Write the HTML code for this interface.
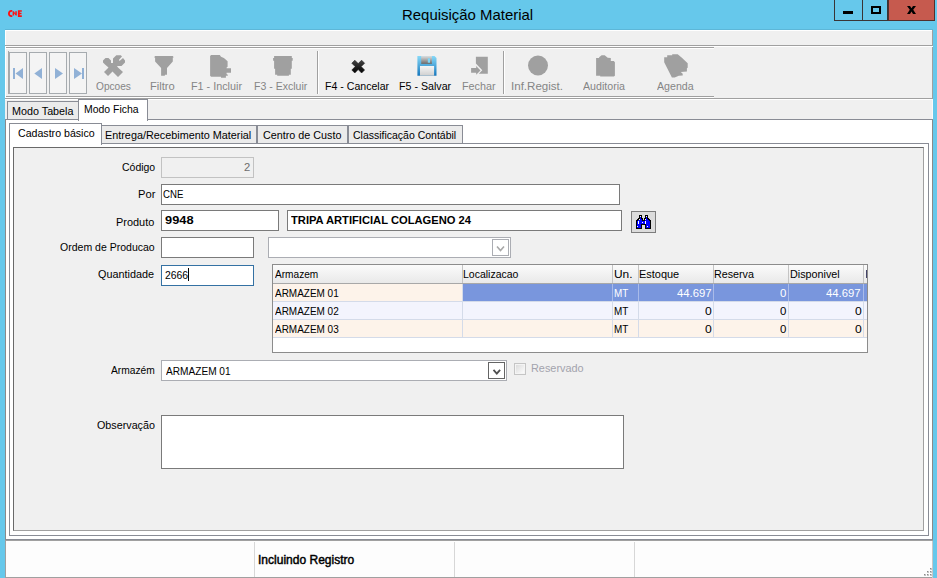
<!DOCTYPE html><html><head><meta charset="utf-8"><style>
html,body{margin:0;padding:0;width:937px;height:578px;overflow:hidden;}
body{position:relative;font-family:"Liberation Sans", sans-serif;}
.b{position:absolute;}
.t{position:absolute;white-space:nowrap;line-height:1;}
</style></head><body>
<div class="b" style="left:0px;top:0px;width:937px;height:578px;background:#66c8eb;"></div>
<div class="b" style="left:5px;top:29px;width:928px;height:1px;background:#5db7d8;"></div>
<div class="b" style="left:5px;top:30px;width:928px;height:548px;background:#f0f0f0;"></div>
<div class="b" style="left:5px;top:30px;width:927px;height:1px;background:#ffffff;"></div>
<div class="b" style="left:5px;top:30px;width:1px;height:69px;background:#ffffff;"></div>
<div class="b" style="left:932px;top:30px;width:1px;height:69px;background:#a0a0a0;"></div>
<div class="b" style="left:932px;top:99px;width:1px;height:20px;background:#fafafa;"></div>
<div class="b" style="left:5px;top:45px;width:928px;height:1px;background:#a0a0a0;"></div>
<div class="b" style="left:5px;top:46px;width:928px;height:1px;background:#ffffff;"></div>
<div class="b" style="left:6px;top:47px;width:708px;height:1px;background:#a0a0a0;"></div>
<div class="b" style="left:6px;top:48px;width:708px;height:1px;background:#ffffff;"></div>
<div class="b" style="left:6px;top:96px;width:708px;height:1px;background:#a0a0a0;"></div>
<div class="b" style="left:6px;top:97px;width:708px;height:1px;background:#ffffff;"></div>
<div class="b" style="left:5px;top:98px;width:928px;height:1px;background:#a0a0a0;"></div>
<div class="b" style="left:5px;top:99px;width:928px;height:1px;background:#ffffff;"></div>
<div class="b" style="left:8px;top:51px;width:1px;height:43px;background:#a8a8a8;"></div>
<div class="b" style="left:9px;top:52px;width:18px;height:42px;background:#f4f4f4;box-sizing:border-box;border:1px solid #a6abaf;"></div>
<div class="b" style="left:29px;top:52px;width:18px;height:42px;background:#f4f4f4;box-sizing:border-box;border:1px solid #a6abaf;"></div>
<div class="b" style="left:49px;top:52px;width:18px;height:42px;background:#f4f4f4;box-sizing:border-box;border:1px solid #a6abaf;"></div>
<div class="b" style="left:69px;top:52px;width:18px;height:42px;background:#f4f4f4;box-sizing:border-box;border:1px solid #a6abaf;"></div>
<div class="b" style="left:317px;top:51px;width:1px;height:43px;background:#a0a0a0;"></div>
<div class="b" style="left:318px;top:51px;width:1px;height:43px;background:#ffffff;"></div>
<div class="b" style="left:503px;top:51px;width:1px;height:43px;background:#a0a0a0;"></div>
<div class="b" style="left:504px;top:51px;width:1px;height:43px;background:#ffffff;"></div>
<div class="b" style="left:5px;top:119px;width:928px;height:422px;background:#ffffff;"></div>
<div class="b" style="left:5px;top:119px;width:928px;height:1px;background:#898c95;"></div>
<div class="b" style="left:5px;top:119px;width:1px;height:422px;background:#8a8a8a;"></div>
<div class="b" style="left:932px;top:119px;width:1px;height:422px;background:#8a8a8a;"></div>
<div class="b" style="left:5px;top:539px;width:928px;height:1px;background:#898c95;"></div>
<div class="b" style="left:5px;top:540px;width:928px;height:1px;background:#a0a0a0;"></div>
<div class="b" style="left:7px;top:101px;width:72px;height:19px;background:#ebebeb;box-sizing:border-box;border:1px solid #898c95;border-bottom:none;"></div>
<div class="b" style="left:78px;top:99px;width:70px;height:21px;background:#ffffff;box-sizing:border-box;border:1px solid #898c95;border-bottom:none;"></div>
<div class="b" style="left:78px;top:99px;width:1px;height:22px;background:#898c95;"></div>
<div class="b" style="left:147px;top:99px;width:1px;height:22px;background:#898c95;"></div>
<div class="b" style="left:5px;top:119px;width:73px;height:1px;background:#898c95;"></div>
<div class="b" style="left:148px;top:119px;width:785px;height:1px;background:#898c95;"></div>
<div class="b" style="left:9px;top:143px;width:920px;height:393px;background:#ffffff;box-sizing:border-box;border:1px solid #898c95;"></div>
<div class="b" style="left:101px;top:125px;width:156px;height:18px;background:#ebebeb;box-sizing:border-box;border:1px solid #898c95;border-bottom:none;"></div>
<div class="b" style="left:257px;top:125px;width:91px;height:18px;background:#ebebeb;box-sizing:border-box;border:1px solid #898c95;border-bottom:none;"></div>
<div class="b" style="left:348px;top:125px;width:115px;height:18px;background:#ebebeb;box-sizing:border-box;border:1px solid #898c95;border-bottom:none;"></div>
<div class="b" style="left:9px;top:123px;width:93px;height:22px;background:#ffffff;box-sizing:border-box;border:1px solid #898c95;border-bottom:none;"></div>
<div class="b" style="left:13px;top:147px;width:911px;height:384px;background:#f0f0f0;box-sizing:border-box;border:1px solid #a0a0a0;border-top-color:#696969;border-left-color:#696969;"></div>
<div class="b" style="left:5px;top:541px;width:928px;height:37px;background:#fdfdfd;"></div>
<div class="b" style="left:5px;top:577px;width:928px;height:1px;background:#a0a0a0;"></div>
<div class="b" style="left:5px;top:541px;width:1px;height:37px;background:#a0a0a0;"></div>
<div class="b" style="left:932px;top:541px;width:1px;height:37px;background:#c8c8c8;"></div>
<div class="b" style="left:254px;top:542px;width:1px;height:35px;background:#d7d7d7;"></div>
<div class="b" style="left:454px;top:542px;width:1px;height:35px;background:#d7d7d7;"></div>
<div class="b" style="left:634px;top:542px;width:1px;height:35px;background:#d7d7d7;"></div>
<div class="b" style="left:161px;top:157px;width:93px;height:21px;background:#f0f0f0;box-sizing:border-box;border:1px solid #c2c2c2;"></div>
<div class="b" style="left:161px;top:184px;width:459px;height:21px;background:#fff;box-sizing:border-box;border:1px solid #7a7a7a;"></div>
<div class="b" style="left:161px;top:210px;width:118px;height:21px;background:#fff;box-sizing:border-box;border:1px solid #7a7a7a;"></div>
<div class="b" style="left:287px;top:210px;width:335px;height:21px;background:#fff;box-sizing:border-box;border:1px solid #7a7a7a;"></div>
<div class="b" style="left:631px;top:211px;width:25px;height:22px;background:#dcdcdc;box-sizing:border-box;border:1px solid #7d7d7d;"></div>
<div class="b" style="left:161px;top:237px;width:93px;height:21px;background:#fff;box-sizing:border-box;border:1px solid #7a7a7a;"></div>
<div class="b" style="left:268px;top:237px;width:243px;height:21px;background:#fff;box-sizing:border-box;border:1px solid #abadb3;"></div>
<div class="b" style="left:492px;top:239px;width:17px;height:17px;background:#fff;box-sizing:border-box;border:1px solid #abadb3;"></div>
<div class="b" style="left:161px;top:265px;width:93px;height:21px;background:#fff;box-sizing:border-box;border:1px solid #3471a3;"></div>
<div class="b" style="left:188px;top:268px;width:1px;height:13px;background:#000;"></div>
<div class="b" style="left:161px;top:360px;width:346px;height:21px;background:#fff;box-sizing:border-box;border:1px solid #abadb3;"></div>
<div class="b" style="left:488px;top:362px;width:17px;height:17px;background:#fff;box-sizing:border-box;border:1px solid #646464;"></div>
<div class="b" style="left:514px;top:363px;width:12px;height:12px;background:#f4f4f4;box-sizing:border-box;border:1px solid #c5c5c5;"></div>
<div class="b" style="left:161px;top:415px;width:463px;height:54px;background:#fff;box-sizing:border-box;border:1px solid #7a7a7a;"></div>
<div class="b" style="left:272px;top:264px;width:596px;height:89px;background:#ffffff;box-sizing:border-box;border:1px solid #8c8c8c;"></div>
<div class="b" style="left:273px;top:265px;width:594px;height:19px;background:linear-gradient(#fbfbfb,#e8e8e8);"></div>
<div class="b" style="left:273px;top:283px;width:594px;height:1px;background:#a8a8a8;"></div>
<div class="b" style="left:462px;top:265px;width:1px;height:18px;background:#c4c4c4;"></div>
<div class="b" style="left:612px;top:265px;width:1px;height:18px;background:#c4c4c4;"></div>
<div class="b" style="left:638px;top:265px;width:1px;height:18px;background:#c4c4c4;"></div>
<div class="b" style="left:713px;top:265px;width:1px;height:18px;background:#c4c4c4;"></div>
<div class="b" style="left:788px;top:265px;width:1px;height:18px;background:#c4c4c4;"></div>
<div class="b" style="left:863px;top:265px;width:1px;height:18px;background:#c4c4c4;"></div>
<div class="b" style="left:273px;top:284px;width:594px;height:17px;background:#fdf3ea;"></div>
<div class="b" style="left:273px;top:301px;width:594px;height:1px;background:#d4dbe9;"></div>
<div class="b" style="left:462px;top:284px;width:1px;height:17px;background:#d4dbe9;"></div>
<div class="b" style="left:612px;top:284px;width:1px;height:17px;background:#d4dbe9;"></div>
<div class="b" style="left:638px;top:284px;width:1px;height:17px;background:#d4dbe9;"></div>
<div class="b" style="left:713px;top:284px;width:1px;height:17px;background:#d4dbe9;"></div>
<div class="b" style="left:788px;top:284px;width:1px;height:17px;background:#d4dbe9;"></div>
<div class="b" style="left:863px;top:284px;width:1px;height:17px;background:#d4dbe9;"></div>
<div class="b" style="left:273px;top:302px;width:594px;height:17px;background:#f3f4fd;"></div>
<div class="b" style="left:273px;top:319px;width:594px;height:1px;background:#d4dbe9;"></div>
<div class="b" style="left:462px;top:302px;width:1px;height:17px;background:#d4dbe9;"></div>
<div class="b" style="left:612px;top:302px;width:1px;height:17px;background:#d4dbe9;"></div>
<div class="b" style="left:638px;top:302px;width:1px;height:17px;background:#d4dbe9;"></div>
<div class="b" style="left:713px;top:302px;width:1px;height:17px;background:#d4dbe9;"></div>
<div class="b" style="left:788px;top:302px;width:1px;height:17px;background:#d4dbe9;"></div>
<div class="b" style="left:863px;top:302px;width:1px;height:17px;background:#d4dbe9;"></div>
<div class="b" style="left:273px;top:320px;width:594px;height:17px;background:#fdf3ea;"></div>
<div class="b" style="left:273px;top:337px;width:594px;height:1px;background:#d4dbe9;"></div>
<div class="b" style="left:462px;top:320px;width:1px;height:17px;background:#d4dbe9;"></div>
<div class="b" style="left:612px;top:320px;width:1px;height:17px;background:#d4dbe9;"></div>
<div class="b" style="left:638px;top:320px;width:1px;height:17px;background:#d4dbe9;"></div>
<div class="b" style="left:713px;top:320px;width:1px;height:17px;background:#d4dbe9;"></div>
<div class="b" style="left:788px;top:320px;width:1px;height:17px;background:#d4dbe9;"></div>
<div class="b" style="left:863px;top:320px;width:1px;height:17px;background:#d4dbe9;"></div>
<div class="b" style="left:463px;top:284px;width:404px;height:17px;background:#7996dd;"></div>
<div class="b" style="left:612px;top:284px;width:1px;height:17px;background:#a9bbe9;"></div>
<div class="b" style="left:638px;top:284px;width:1px;height:17px;background:#a9bbe9;"></div>
<div class="b" style="left:713px;top:284px;width:1px;height:17px;background:#a9bbe9;"></div>
<div class="b" style="left:788px;top:284px;width:1px;height:17px;background:#a9bbe9;"></div>
<div class="b" style="left:863px;top:284px;width:1px;height:17px;background:#a9bbe9;"></div>
<div class="b" style="left:866px;top:270px;width:1px;height:8px;background:#45456a;"></div>
<svg class="ic" width="937" height="578" viewBox="0 0 937 578" style="position:absolute;left:0;top:0;">
<defs>
<linearGradient id="gx" x1="0" y1="0" x2="0" y2="1"><stop offset="0" stop-color="#444"/><stop offset="1" stop-color="#000"/></linearGradient>
<linearGradient id="gfb" x1="0" y1="0" x2="0" y2="1"><stop offset="0" stop-color="#86d8f7"/><stop offset="1" stop-color="#1677bd"/></linearGradient>
<linearGradient id="gfs" x1="0" y1="0" x2="0" y2="1"><stop offset="0" stop-color="#dedede"/><stop offset="1" stop-color="#6a6a6a"/></linearGradient>
<linearGradient id="gfl" x1="0" y1="0" x2="0" y2="1"><stop offset="0" stop-color="#f6f6f6"/><stop offset="1" stop-color="#cfcfcf"/></linearGradient>
<linearGradient id="gcb" x1="0" y1="0" x2="1" y2="1"><stop offset="0" stop-color="#dcdcdc"/><stop offset="1" stop-color="#fbfbfb"/></linearGradient>
</defs>
<!-- CNE logo -->
<g fill="#ff1010">
<path d="M12.3,10 C9.5,9.6 8,11.3 8,13.5 C8,15.8 9.6,17.3 12.3,16.9 L12.3,15.2 C10.6,15.5 9.9,14.6 9.9,13.5 C9.9,12.3 10.6,11.4 12.3,11.7 Z"/>
<path d="M12.6,11.3 H13.8 L15.3,13.6 V11.3 H16.8 V15.6 H15.7 L14.1,13.3 V15.6 H12.6 Z"/>
<path d="M17.9,10.2 H21.8 V11.8 H19.7 V12.8 H21.5 V14.2 H19.7 V15.3 H21.8 V16.9 H17.9 Z"/>
</g>
<!-- window buttons -->
<rect x="834.5" y="-1" width="53" height="21.5" fill="none" stroke="#3a3535" stroke-width="1"/>
<line x1="862.5" y1="0" x2="862.5" y2="20" stroke="#3a3535" stroke-width="1"/>
<rect x="888" y="0" width="47" height="21" fill="#c65a4e"/>
<rect x="888.5" y="-1" width="46" height="21.5" fill="none" stroke="#52302c" stroke-width="1"/>
<rect x="843" y="11" width="10" height="3" fill="#000"/>
<rect x="872" y="7" width="8" height="6" fill="none" stroke="#000" stroke-width="2"/>
<path d="M907,6 H910 L911.5,8.3 L913,6 H916 L913.2,9.8 L916,14 H913 L911.5,11.6 L910,14 H907 L909.8,9.8 Z" fill="#000"/>
<!-- nav arrows -->
<g fill="#91b1d6">
<rect x="13" y="68" width="2" height="11"/>
<path d="M15.5,73.5 L23,68 V79 Z"/>
<path d="M34.3,73.5 L42,68 V79 Z"/>
<path d="M63,73.5 L55,68 V79 Z"/>
<path d="M82,73.5 L74,68 V79 Z"/>
<rect x="82" y="68" width="2" height="11"/>
</g>
<!-- gray toolbar icons -->
<g fill="#a0a0a0">
<path transform="translate(100,52)" d="M3,8.5 L5.5,6 H8.5 L11,8.5 V11 H13 V6.5 L16.3,3.2 H20.8 L22,4.5 L19,7.8 L19.5,9 L23,6 L25,8.5 V10.5 L21.5,14 H17 L18,15.5 L23,20 L18,25 L12.5,19.5 L8,24 L4,20 L8.5,15.5 L5,12.5 L3,10.5 Z"/>
<path transform="translate(150,52)" d="M5.1,4.1 H22.8 L23.7,5.3 L22.8,5.8 V9.4 L17,16 V22.8 H15 L14.8,23.7 H11.1 V16 L5.1,9.4 V5.8 L4.1,5.3 Z"/>
<path transform="translate(206,52)" d="M5.1,3.1 H13.8 L15,4.8 L17.9,6.1 L21.6,9.2 V14.8 L20.6,15.5 V16.2 H25 V20.8 H20.6 V22 L21.8,22.8 V23.7 H19.9 V25.7 H15 V24.7 H5.1 L4.1,23.7 V4.1 Z"/>
<path transform="translate(269,52)" d="M5.1,4.1 H22.8 V6.1 H23.7 V8.7 H22.8 V16.7 H21.8 V22.8 H19.9 V23.7 H8.2 V22.8 H6.1 V16.7 H5.1 V8.7 H4.1 V6.1 H5.1 Z"/>
<path transform="translate(466,52)" d="M9.9,4.8 H21.8 V21.8 H12.8 L16.3,18.2 L9.9,11.6 Z"/>
<path transform="translate(466,52)" d="M5.1,16 H10.2 V14 L14.5,18.4 L10.2,22.8 V20.8 H5.1 Z"/>
<circle cx="538" cy="65.5" r="10"/>
<path transform="translate(590,50)" d="M6.1,8 H9.1 V7.2 L11.6,5.3 H14.7 L17.7,7.8 L20.8,8 V11.1 H23.8 L24.9,12.2 V25.7 L23.8,26.6 H10.2 V25.7 H6.1 Z"/>
<path transform="translate(660,50)" d="M4.2,7.2 H7.2 V5.3 H12.2 V4.2 H17.7 L21.6,7.5 L27.7,13.3 V17.7 L26.9,18.3 V21.6 L20.8,21.9 L22.7,23.8 V25.5 L18.8,25.7 L14.7,27.4 H11.9 L4.2,12.2 Z"/>
</g>
<!-- cancel X -->
<path transform="translate(344,52)" d="M7.80,11.20 L10.80,8.20 L14.20,11.60 L17.60,8.20 L20.60,11.20 L17.20,14.60 L20.60,18.00 L17.60,21.00 L14.20,17.60 L10.80,21.00 L7.80,18.00 L11.20,14.60 Z" stroke="#222" stroke-width="0.6" stroke-linejoin="round" fill="url(#gx)"/>
<!-- floppy -->
<g transform="translate(413,52)">
<path d="M4.4,4.1 H21.5 L23.5,6.1 V23.7 H4.4 Z" fill="url(#gfb)"/>
<rect x="8.2" y="4.1" width="10.7" height="7.8" fill="url(#gfs)"/>
<rect x="14.8" y="6.3" width="2.2" height="4.4" fill="#7fd6f6"/>
<rect x="7" y="14" width="14.1" height="9.7" fill="url(#gfl)"/>
</g>
<!-- binoculars -->
<g transform="translate(636,215)" shape-rendering="crispEdges">
<path d="M3,0 H6 V3 H7 V5 H8 V3 H9 V0 H12 V3 H13 V4 H14 V5 H15 V14 H9 V10 H6 V14 H0 V5 H1 V4 H2 V3 H3 Z" fill="#000"/>
<path d="M4,1 H5 V4 H6 V6 H9 V4 H10 V1 H11 V4 H12 V5 H13 V6 H14 V13 H10 V9 H5 V13 H1 V6 H2 V5 H3 V4 H4 Z" fill="#0000ff"/>
<g fill="#fff"><rect x="4" y="1" width="1" height="1"/><rect x="10" y="1" width="1" height="1"/><rect x="3" y="4" width="1" height="1"/><rect x="9" y="4" width="1" height="1"/><rect x="2" y="6" width="1" height="3"/><rect x="6" y="7" width="1" height="1"/><rect x="9" y="6" width="1" height="3"/><rect x="1" y="11" width="1" height="1"/><rect x="11" y="11" width="1" height="1"/></g>
</g>
<!-- combo chevrons -->
<path d="M493.5,369.8 L496.8,373.6 L500.1,369.8" fill="none" stroke="#505050" stroke-width="1.8"/>
<path d="M497,246.5 L500.5,250.5 L504,246.5" fill="none" stroke="#a8a8a8" stroke-width="1.6"/>
<!-- checkbox inner -->
<rect x="516" y="365" width="8" height="8" fill="url(#gcb)"/>
<!-- size grip -->
<g><rect x="930" y="568" width="2" height="2" fill="#c4c4c4"/><rect x="930" y="568" width="1" height="1" fill="#8a8a8a"/><rect x="927" y="571" width="2" height="2" fill="#c4c4c4"/><rect x="927" y="571" width="1" height="1" fill="#8a8a8a"/><rect x="930" y="571" width="2" height="2" fill="#c4c4c4"/><rect x="930" y="571" width="1" height="1" fill="#8a8a8a"/><rect x="924" y="574" width="2" height="2" fill="#c4c4c4"/><rect x="924" y="574" width="1" height="1" fill="#8a8a8a"/><rect x="927" y="574" width="2" height="2" fill="#c4c4c4"/><rect x="927" y="574" width="1" height="1" fill="#8a8a8a"/><rect x="930" y="574" width="2" height="2" fill="#c4c4c4"/><rect x="930" y="574" width="1" height="1" fill="#8a8a8a"/></g>
</svg>

<div class="t" id="t0" style="left:402.45px;top:7.01px;font-size:15px;font-weight:400;color:#000;transform:scaleX(0.9958);transform-origin:0 0;">Requisição Material</div>
<div class="t" id="t1" style="left:96.00px;top:81.00px;font-size:11px;font-weight:400;color:#858585;transform:scaleX(0.9211);transform-origin:0 0;">Opcoes</div>
<div class="t" id="t2" style="left:150.39px;top:81.00px;font-size:11px;font-weight:400;color:#858585;transform:scaleX(1.0135);transform-origin:0 0;">Filtro</div>
<div class="t" id="t3" style="left:191.20px;top:81.00px;font-size:11px;font-weight:400;color:#858585;transform:scaleX(0.9811);transform-origin:0 0;">F1 - Incluir</div>
<div class="t" id="t4" style="left:253.81px;top:81.00px;font-size:11px;font-weight:400;color:#858585;transform:scaleX(0.9590);transform-origin:0 0;">F3 - Excluir</div>
<div class="t" id="t5" style="left:324.65px;top:81.00px;font-size:11px;font-weight:400;color:#000;transform:scaleX(0.9621);transform-origin:0 0;">F4 - Cancelar</div>
<div class="t" id="t6" style="left:399.17px;top:81.00px;font-size:11px;font-weight:400;color:#000;transform:scaleX(0.9687);transform-origin:0 0;">F5 - Salvar</div>
<div class="t" id="t7" style="left:462.17px;top:81.00px;font-size:11px;font-weight:400;color:#858585;transform:scaleX(0.9793);transform-origin:0 0;">Fechar</div>
<div class="t" id="t8" style="left:511.40px;top:81.00px;font-size:11px;font-weight:400;color:#858585;transform:scaleX(1.0504);transform-origin:0 0;">Inf.Regist.</div>
<div class="t" id="t9" style="left:583.42px;top:81.00px;font-size:11px;font-weight:400;color:#858585;transform:scaleX(0.9664);transform-origin:0 0;">Auditoria</div>
<div class="t" id="t10" style="left:657.19px;top:81.00px;font-size:11px;font-weight:400;color:#858585;transform:scaleX(0.9674);transform-origin:0 0;">Agenda</div>
<div class="t" id="t11" style="left:11.88px;top:106.00px;font-size:11px;font-weight:400;color:#000;transform:scaleX(0.9793);transform-origin:0 0;">Modo Tabela</div>
<div class="t" id="t12" style="left:84.19px;top:104.00px;font-size:11px;font-weight:400;color:#000;transform:scaleX(0.9498);transform-origin:0 0;">Modo Ficha</div>
<div class="t" id="t13" style="left:17.71px;top:128.00px;font-size:11px;font-weight:400;color:#000;transform:scaleX(0.9647);transform-origin:0 0;">Cadastro básico</div>
<div class="t" id="t14" style="left:104.95px;top:130.00px;font-size:11px;font-weight:400;color:#000;transform:scaleX(0.9843);transform-origin:0 0;">Entrega/Recebimento Material</div>
<div class="t" id="t15" style="left:262.87px;top:130.00px;font-size:11px;font-weight:400;color:#000;transform:scaleX(0.9792);transform-origin:0 0;">Centro de Custo</div>
<div class="t" id="t16" style="left:353.07px;top:130.00px;font-size:11px;font-weight:400;color:#000;transform:scaleX(0.9530);transform-origin:0 0;">Classificação Contábil</div>
<div class="t" id="t17" style="left:121.72px;top:162.01px;font-size:11px;font-weight:400;color:#000;transform:scaleX(0.9523);transform-origin:0 0;">Código</div>
<div class="t" id="t18" style="left:137.75px;top:189.00px;font-size:11px;font-weight:400;color:#000;transform:scaleX(1.0133);transform-origin:0 0;">Por</div>
<div class="t" id="t19" style="left:115.99px;top:217.00px;font-size:11px;font-weight:400;color:#000;transform:scaleX(0.9942);transform-origin:0 0;">Produto</div>
<div class="t" id="t20" style="left:59.77px;top:242.00px;font-size:11px;font-weight:400;color:#000;transform:scaleX(0.9559);transform-origin:0 0;">Ordem de Producao</div>
<div class="t" id="t21" style="left:98.27px;top:269.00px;font-size:11px;font-weight:400;color:#000;transform:scaleX(0.9852);transform-origin:0 0;">Quantidade</div>
<div class="t" id="t22" style="left:110.81px;top:365.00px;font-size:11px;font-weight:400;color:#000;transform:scaleX(0.9310);transform-origin:0 0;">Armazém</div>
<div class="t" id="t23" style="left:96.89px;top:420.00px;font-size:11px;font-weight:400;color:#000;transform:scaleX(0.9768);transform-origin:0 0;">Observação</div>
<div class="t" id="t24" style="left:244.29px;top:162.00px;font-size:11px;font-weight:400;color:#6d6d6d;transform:scaleX(1.0176);transform-origin:0 0;">2</div>
<div class="t" id="t25" style="left:163.49px;top:189.00px;font-size:11px;font-weight:400;color:#000;transform:scaleX(0.8767);transform-origin:0 0;">CNE</div>
<div class="t" id="t26" style="left:164.75px;top:215.01px;font-size:11px;font-weight:700;color:#000;transform:scaleX(1.1653);transform-origin:0 0;">9948</div>
<div class="t" id="t27" style="left:290.60px;top:215.01px;font-size:11px;font-weight:700;color:#000;transform:scaleX(1.0155);transform-origin:0 0;">TRIPA ARTIFICIAL COLAGENO 24</div>
<div class="t" id="t28" style="left:164.53px;top:270.00px;font-size:11px;font-weight:400;color:#000;transform:scaleX(0.9464);transform-origin:0 0;">2666</div>
<div class="t" id="t29" style="left:165.62px;top:366.00px;font-size:11px;font-weight:400;color:#000;transform:scaleX(0.9191);transform-origin:0 0;">ARMAZEM 01</div>
<div class="t" id="t30" style="left:530.62px;top:363.01px;font-size:11px;font-weight:400;color:#a3a3ad;transform:scaleX(0.9890);transform-origin:0 0;">Reservado</div>
<div class="t" id="t31" style="left:274.79px;top:269.00px;font-size:11px;font-weight:400;color:#000;transform:scaleX(0.9185);transform-origin:0 0;">Armazem</div>
<div class="t" id="t32" style="left:462.85px;top:269.00px;font-size:11px;font-weight:400;color:#000;transform:scaleX(0.9534);transform-origin:0 0;">Localizacao</div>
<div class="t" id="t33" style="left:613.93px;top:269.00px;font-size:11px;font-weight:400;color:#000;transform:scaleX(1.0822);transform-origin:0 0;">Un.</div>
<div class="t" id="t34" style="left:639.20px;top:269.00px;font-size:11px;font-weight:400;color:#000;transform:scaleX(0.9958);transform-origin:0 0;">Estoque</div>
<div class="t" id="t35" style="left:714.12px;top:269.00px;font-size:11px;font-weight:400;color:#000;transform:scaleX(0.9755);transform-origin:0 0;">Reserva</div>
<div class="t" id="t36" style="left:789.58px;top:269.00px;font-size:11px;font-weight:400;color:#000;transform:scaleX(0.9786);transform-origin:0 0;">Disponivel</div>
<div class="t" id="t37" style="left:275.00px;top:288.00px;font-size:11px;font-weight:400;color:#000;transform:scaleX(0.9064);transform-origin:0 0;">ARMAZEM 01</div>
<div class="t" id="t38" style="left:614.48px;top:288.00px;font-size:11px;font-weight:400;color:#fff;transform:scaleX(0.9009);transform-origin:0 0;">MT</div>
<div class="t" id="t39" style="left:676.58px;top:288.00px;font-size:11px;font-weight:400;color:#fff;transform:scaleX(1.0280);transform-origin:0 0;">44.697</div>
<div class="t" id="t40" style="left:779.79px;top:288.00px;font-size:11px;font-weight:400;color:#fff;transform:scaleX(1.0407);transform-origin:0 0;">0</div>
<div class="t" id="t41" style="left:826.38px;top:288.00px;font-size:11px;font-weight:400;color:#fff;transform:scaleX(1.0280);transform-origin:0 0;">44.697</div>
<div class="t" id="t42" style="left:275.00px;top:306.00px;font-size:11px;font-weight:400;color:#000;transform:scaleX(0.9064);transform-origin:0 0;">ARMAZEM 02</div>
<div class="t" id="t43" style="left:614.48px;top:306.00px;font-size:11px;font-weight:400;color:#000;transform:scaleX(0.9009);transform-origin:0 0;">MT</div>
<div class="t" id="t44" style="left:704.96px;top:306.00px;font-size:11px;font-weight:400;color:#000;transform:scaleX(1.1053);transform-origin:0 0;">0</div>
<div class="t" id="t45" style="left:779.79px;top:306.00px;font-size:11px;font-weight:400;color:#000;transform:scaleX(1.0407);transform-origin:0 0;">0</div>
<div class="t" id="t46" style="left:854.71px;top:306.00px;font-size:11px;font-weight:400;color:#000;transform:scaleX(1.1053);transform-origin:0 0;">0</div>
<div class="t" id="t47" style="left:275.00px;top:324.00px;font-size:11px;font-weight:400;color:#000;transform:scaleX(0.9062);transform-origin:0 0;">ARMAZEM 03</div>
<div class="t" id="t48" style="left:614.48px;top:324.00px;font-size:11px;font-weight:400;color:#000;transform:scaleX(0.9009);transform-origin:0 0;">MT</div>
<div class="t" id="t49" style="left:704.96px;top:324.00px;font-size:11px;font-weight:400;color:#000;transform:scaleX(1.1053);transform-origin:0 0;">0</div>
<div class="t" id="t50" style="left:779.79px;top:324.00px;font-size:11px;font-weight:400;color:#000;transform:scaleX(1.0407);transform-origin:0 0;">0</div>
<div class="t" id="t51" style="left:854.71px;top:324.00px;font-size:11px;font-weight:400;color:#000;transform:scaleX(1.1053);transform-origin:0 0;">0</div>
<div class="t" id="t52" style="left:258.36px;top:554.00px;font-size:12px;font-weight:400;color:#000;transform:scaleX(1.0018);transform-origin:0 0;-webkit-text-stroke:0.45px #000;">Incluindo Registro</div>
</body></html>
